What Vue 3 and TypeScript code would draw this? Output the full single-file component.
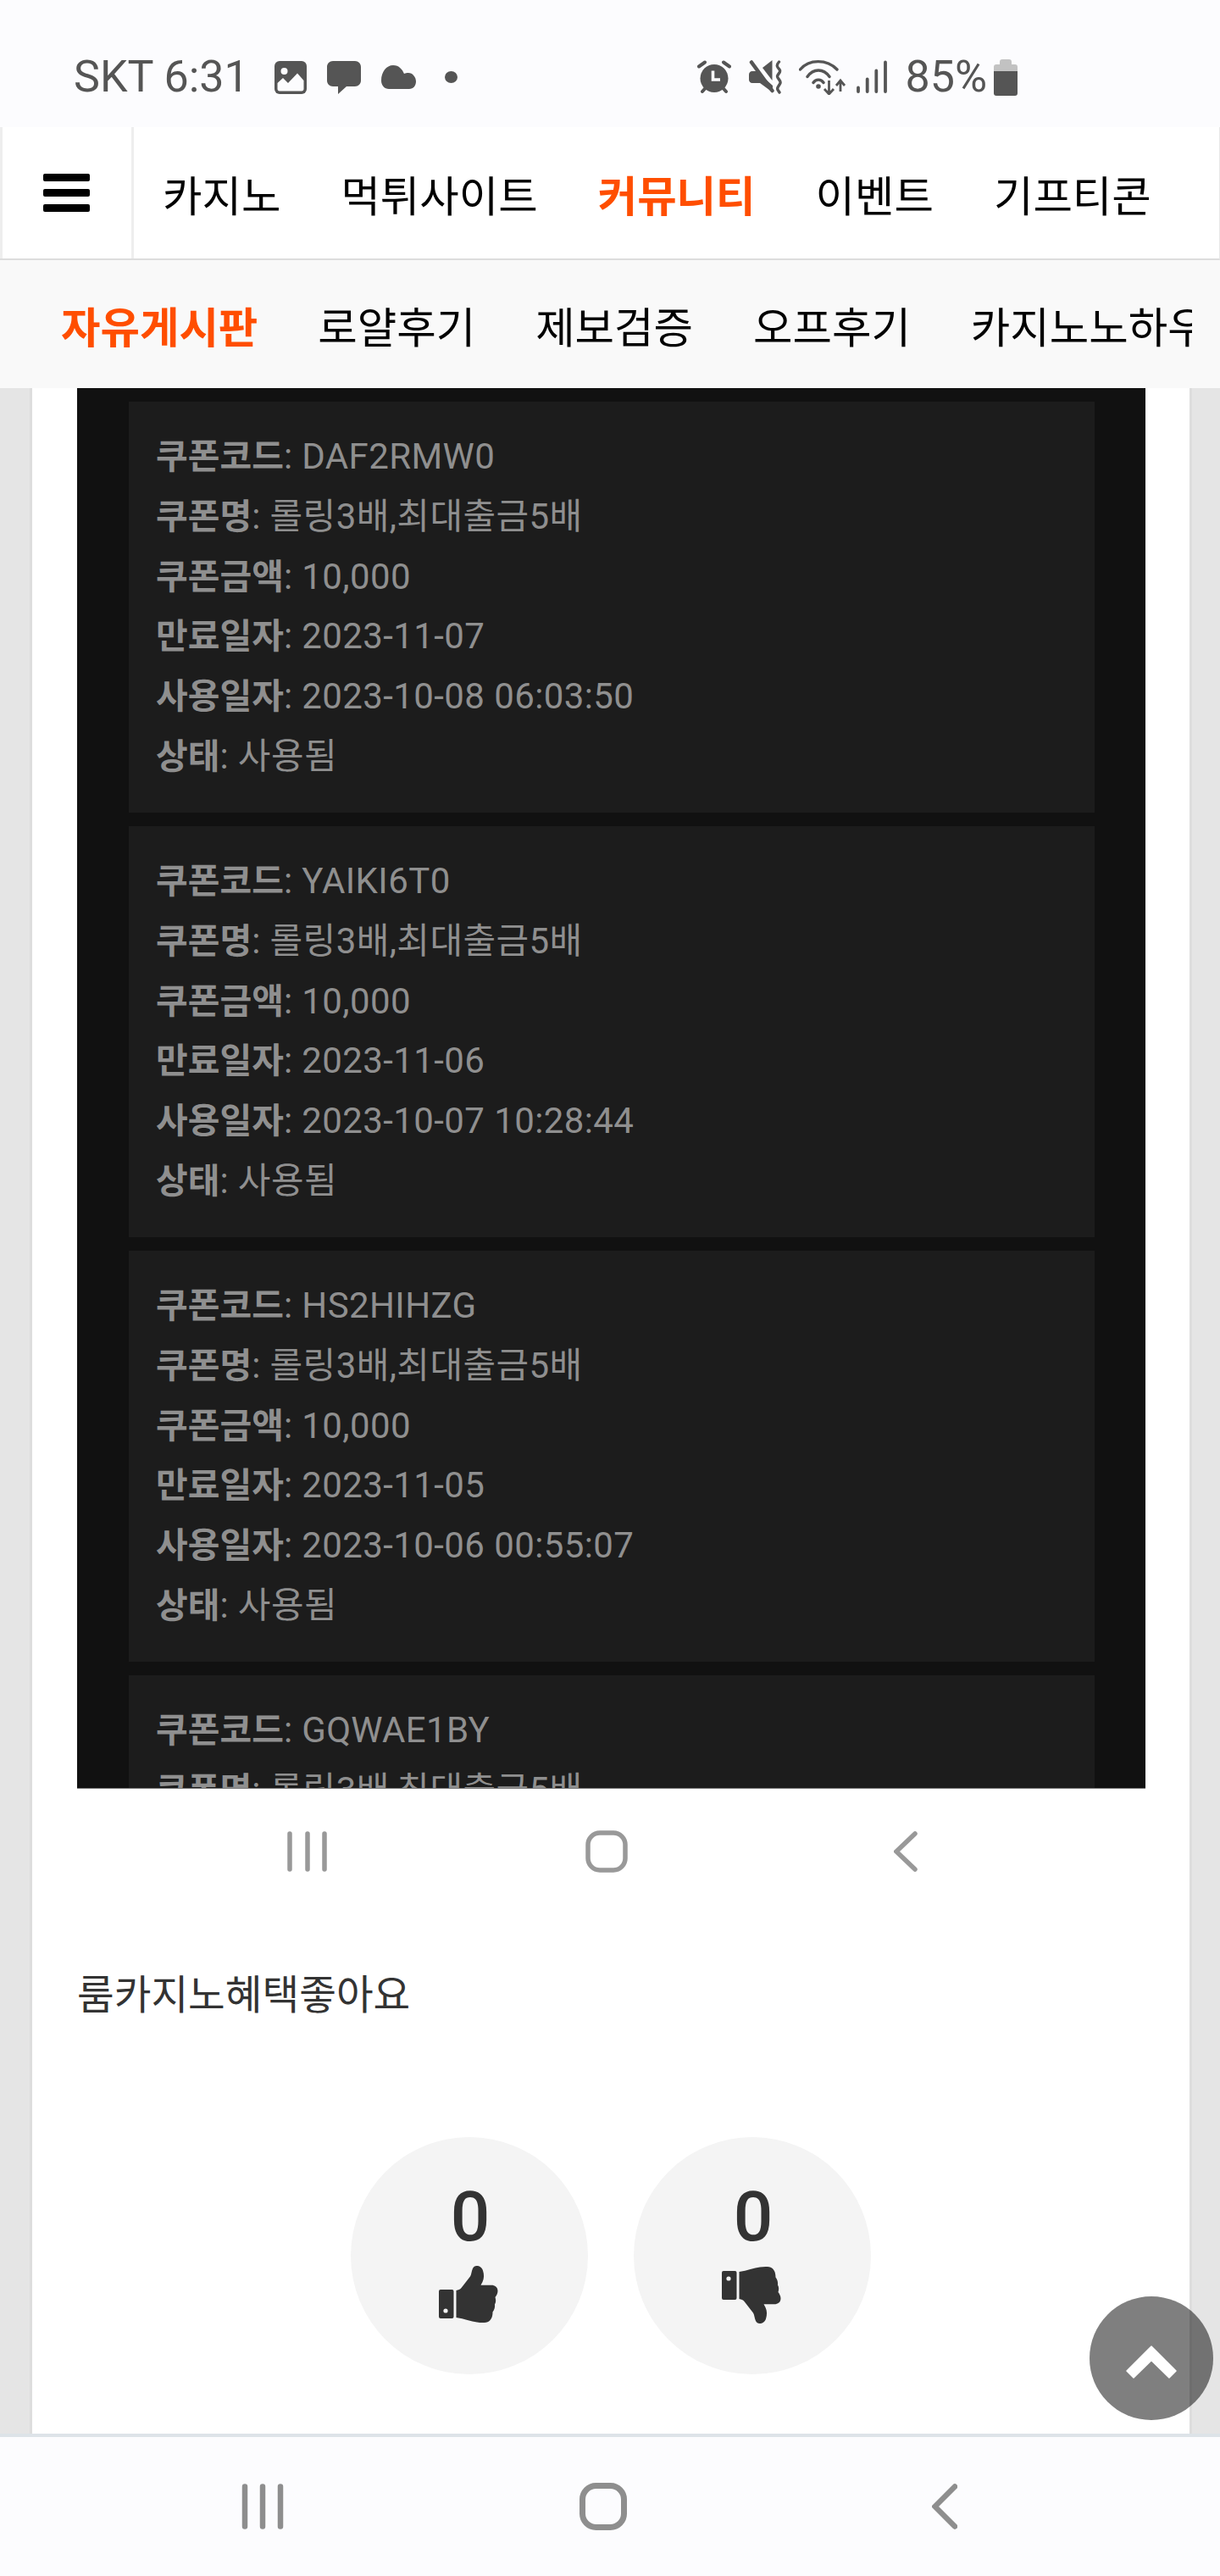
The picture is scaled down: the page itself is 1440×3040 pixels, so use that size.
<script setup lang="ts">
interface Coupon { code: string; expires: string; used: string }
const mainNav: { label: string; active?: boolean }[] = [
  { label: '카지노' },
  { label: '먹튀사이트' },
  { label: '커뮤니티', active: true },
  { label: '이벤트' },
  { label: '기프티콘' },
]
const subNav: { label: string; active?: boolean }[] = [
  { label: '자유게시판', active: true },
  { label: '로얄후기' },
  { label: '제보검증' },
  { label: '오프후기' },
  { label: '카지노노하우' },
]
const coupons: Coupon[] = [
  { code: 'DAF2RMW0', expires: '2023-11-07', used: '2023-10-08 06:03:50' },
  { code: 'YAIKI6T0', expires: '2023-11-06', used: '2023-10-07 10:28:44' },
  { code: 'HS2HIHZG', expires: '2023-11-05', used: '2023-10-06 00:55:07' },
  { code: 'GQWAE1BY', expires: '2023-11-04', used: '2023-10-05 00:00:00' },
]
const thumb = 'M20.5 29C23 28.5 25 28 26.5 26L37 12.5C38.5 10 38.5 6 40 3C41 1 42.5 0 44.5 0C48 0 51 2 52 5.5C53.5 10 53.5 15 51.5 19L49.5 22.7H62C66 22.7 69.5 25 69.5 29.5C69.5 32.5 68 35 66.5 37C67.5 40 67.5 43 66 45.5C66.5 48.5 65.5 52 63.5 54.5C63.5 59 62.5 63 59 65.5C56 67.5 50 67.3 45 66.5C38 65.5 30 62.5 20.5 61Z'
</script>

<template>
  <div class="page">
    <div class="status">
      <div class="status-left">
        <span class="status-text">SKT 6:31</span>
        <svg class="ic-image" width="38" height="39" viewBox="0 0 38 39">
          <rect width="38" height="39" rx="6" fill="#555" />
          <circle cx="11.5" cy="12" r="4" fill="#fcfcfe" />
          <path d="M3.5 26L10 20L16 26L27 14.5L34.5 23V33C34.5 34.5 33.5 35.5 32 35.5H6C4.5 35.5 3.5 34.5 3.5 33Z" fill="#fcfcfe" />
        </svg>
        <svg class="ic-msg" width="40" height="39" viewBox="0 0 40 39">
          <path d="M7 0H33C37 0 40 3 40 7V23C40 27 37 30 33 30H23L13 39V30H7C3 30 0 27 0 23V7C0 3 3 0 7 0Z" fill="#555" />
        </svg>
        <svg class="ic-cloud" width="41" height="28" viewBox="0 0 41 28">
          <path d="M9 28C4 28 0 24 0 18C0 8 6 0 14 0C21 0 25 5 27 10C29 9 30 9 32 9C37 9 41 14 41 19C41 24 38 28 33 28Z" fill="#555" />
        </svg>
        <span class="dot"></span>
      </div>
      <div class="status-right">
        <svg class="ic-alarm" width="40" height="40" viewBox="0 0 40 40">
          <circle cx="20" cy="21.5" r="16.5" fill="#555" />
          <path d="M18.5 12.5V23H27" fill="none" stroke="#fcfcfe" stroke-width="3.6" />
          <path d="M2 7.5L9 2.5M38 7.5L31 2.5M6 37L10 32.5M34 37L30 32.5" stroke="#555" stroke-width="4" stroke-linecap="round" />
        </svg>
        <svg class="ic-mute" width="40" height="40" viewBox="0 0 40 40">
          <path d="M0 17C0 15 1.500 13 4 13H9L28 30V38L13 27H4C1.500 27 0 25 0 23Z" fill="#555" />
          <path d="M16 9L27.500 0V24Z" fill="#555" />
          <path d="M3 2.500L27.500 36" stroke="#555" stroke-width="4.500" stroke-linecap="round" />
          <path d="M35.500 2C32 6 33 8 36 11C38.500 14 34 16 33.500 19C33.500 22 38 24 37 27C36 30 32.500 32 34 35L36 38" fill="none" stroke="#555" stroke-width="3.400" stroke-linecap="round" />
        </svg>
        <svg class="ic-wifi" width="58" height="42" viewBox="0 0 58 42">
          <path d="M1.500 12C12 -0.500 33 -0.500 45 12M10 20.500C17 10.500 29 10.500 36 20.500M17 27.500C20 23 26 23 29 27.500" fill="none" stroke="#555" stroke-width="3.400" stroke-linecap="round" />
          <circle cx="23" cy="32" r="2.800" fill="#555" />
          <path d="M35.500 25V40M30 35L35.500 41L41 35M49 38V26M44 31L49 25L54 31" fill="none" stroke="#555" stroke-width="2.800" />
        </svg>
        <svg class="ic-signal" width="37" height="40" viewBox="0 0 37 40">
          <path d="M2 32.500V37M12.700 22.500V37M23.300 12.500V37M34 2.500V37" stroke="#555" stroke-width="3.800" stroke-linecap="round" />
        </svg>
        <span class="status-text pct">85%</span>
        <svg class="ic-battery" width="28" height="43" viewBox="0 0 28 43">
          <path d="M7 3C7 1 8 0 10 0H18C20 0 21 1 21 3V6H25C27 6 28 7 28 9V14H0V9C0 7 1 6 3 6H7Z" fill="#c2c2c2" />
          <path d="M0 14H28V40C28 42 27 43 25 43H3C1 43 0 42 0 40Z" fill="#555" />
        </svg>
      </div>
    </div>

    <header class="header">
      <div class="burger"><span></span><span></span><span></span></div>
      <nav class="main-nav">
        <a v-for="item in mainNav" :key="item.label" :class="{ active: item.active }">{{ item.label }}</a>
      </nav>
    </header>

    <nav class="sub-nav">
      <div class="sub-track">
        <a v-for="item in subNav" :key="item.label" :class="{ active: item.active }">{{ item.label }}</a>
      </div>
    </nav>

    <main class="main">
      <div class="column">
        <div class="shot">
          <div v-for="c in coupons" :key="c.code" class="card">
            <p><b>쿠폰코드</b>: {{ c.code }}</p>
            <p><b>쿠폰명</b>: 롤링3배,최대출금5배</p>
            <p><b>쿠폰금액</b>: 10,000</p>
            <p><b>만료일자</b>: {{ c.expires }}</p>
            <p><b>사용일자</b>: {{ c.used }}</p>
            <p><b>상태</b>: 사용됨</p>
          </div>
        </div>
        <div class="shot-nav">
          <svg width="50" height="48" viewBox="0 0 50 48">
            <path d="M3 3V45M24 3V45M44 3V45" stroke="#999" stroke-width="5.5" stroke-linecap="round" />
          </svg>
          <svg width="50" height="50" viewBox="0 0 50 50">
            <rect x="3" y="3" width="44" height="44" rx="14" fill="none" stroke="#999" stroke-width="5.5" />
          </svg>
          <svg width="28" height="48" viewBox="0 0 28 48">
            <path d="M25 3L3 24L25 45" fill="none" stroke="#999" stroke-width="5.5" stroke-linecap="round" />
          </svg>
        </div>
        <p class="post-text">룸카지노혜택좋아요</p>
        <div class="votes">
          <div class="vote">
            <span class="count">0</span>
            <svg class="thumb-up" width="70" height="68" viewBox="0 0 70 68">
              <rect y="28" width="17.5" height="34" rx="2" fill="#333" />
              <circle cx="8" cy="53" r="2.6" fill="#f4f4f4" />
              <path :d="thumb" fill="#333" />
            </svg>
          </div>
          <div class="vote">
            <span class="count">0</span>
            <svg class="thumb-down" width="70" height="68" viewBox="0 0 70 68">
              <g transform="translate(0,68) scale(1,-1)">
                <rect y="28" width="17.5" height="34" rx="2" fill="#333" />
                <circle cx="8" cy="53" r="2.6" fill="#f4f4f4" />
                <path :d="thumb" fill="#333" />
              </g>
            </svg>
          </div>
        </div>
      </div>
      <button class="to-top" type="button" aria-label="top">
        <svg width="60" height="39" viewBox="0 0 60 39">
          <path d="M30 1L59 30L51 38L30 17.500L9 38L1 30Z" fill="#fff" stroke="#fff" stroke-width="1.500" stroke-linejoin="round" />
        </svg>
      </button>
    </main>

    <footer class="sys-nav">
      <svg width="50" height="54" viewBox="0 0 50 54">
        <path d="M4 3.5V50.5M25 3.5V50.5M46 3.5V50.5" stroke="#8e8e8e" stroke-width="6.5" stroke-linecap="round" />
      </svg>
      <svg width="56" height="56" viewBox="0 0 56 56">
        <rect x="3.5" y="3.5" width="49" height="49" rx="16" fill="none" stroke="#8e8e8e" stroke-width="7" />
      </svg>
      <svg width="30" height="54" viewBox="0 0 30 54">
        <path d="M27 3.5L3.5 27L27 50.5" fill="none" stroke="#8e8e8e" stroke-width="6.5" stroke-linecap="round" />
      </svg>
    </footer>
  </div>
</template>

<style scoped>
.page {
  width: 1440px;
  height: 3040px;
  display: flex;
  flex-direction: column;
  overflow: hidden;
  font-family: Roboto, "Noto Sans CJK KR", sans-serif;
  background: #fff;
}
.status {
  height: 150px;
  flex: none;
  display: flex;
  align-items: center;
  justify-content: space-between;
  padding: 0 239px 0 87px;
  box-sizing: border-box;
  background: #fcfcfe;
  color: #555;
}
.status-left, .status-right {
  display: flex;
  align-items: center;
  height: 60px;
  margin-top: 32px;
}
.status-text { font-size: 52px; line-height: 60px; }
.ic-image { margin-left: 30px; }
.ic-msg { margin-left: 24px; }
.ic-cloud { margin-left: 24px; }
.dot { width: 15px; height: 14px; border-radius: 50%; background: #555; margin-left: 34px; }
.ic-mute { margin-left: 21px; }
.ic-wifi { margin-left: 19px; }
.ic-signal { margin-left: 10px; }
.pct { margin-left: 20px; }
.ic-battery { margin-left: 8px; }

.header {
  height: 157px;
  flex: none;
  display: flex;
  box-sizing: border-box;
  border-bottom: 2px solid #ddd;
  border-right: 1px solid #e8e8e8;
  background: #fff;
}
.burger {
  width: 158px;
  box-sizing: border-box;
  border-left: 3px solid #eee;
  border-right: 3px solid #eee;
  display: flex;
  flex-direction: column;
  gap: 9px;
  padding: 55px 0 0 48px;
}
.burger span { display: block; width: 55px; height: 9px; border-radius: 2px; background: #000; }
.main-nav {
  display: flex;
  align-items: center;
  gap: 71px;
  padding-left: 34px;
  font-size: 50.5px;
  color: #000;
}
.main-nav a, .sub-track a { white-space: nowrap; flex: none; }
.active { color: #ff4e00; font-weight: 700; }
.sub-nav {
  height: 151px;
  flex: none;
  background: #f9f9f9;
}
.sub-track {
  width: 1407px;
  height: 100%;
  box-sizing: border-box;
  display: flex;
  align-items: center;
  gap: 71px;
  padding-left: 72px;
  font-size: 50.5px;
  color: #000;
  overflow: hidden;
}

.main {
  flex: 1;
  min-height: 0;
  position: relative;
  background: #e5e5e5;
  overflow: hidden;
  border-bottom: 4px solid #dde3e8;
}
.column {
  width: 1372px;
  margin-left: 35px;
  height: 100%;
  box-sizing: border-box;
  background: #fff;
  border-left: 3px solid #ddd;
  border-right: 3px solid #ddd;
}
.shot {
  margin: 0 52px 0 53px;
  height: 1653px;
  box-sizing: border-box;
  padding: 16px 60px 0 61px;
  background: #111;
  overflow: hidden;
  border-bottom: 1px solid #777;
}
.card {
  height: 485px;
  margin-bottom: 16px;
  box-sizing: border-box;
  padding: 30px 32px;
  background: #1c1c1c;
  color: #8f8f8f;
  font-size: 42px;
  letter-spacing: .4px;
  line-height: 70px;
}
.card p { margin: 0; height: 70.8px; white-space: nowrap; }
.card b { font-weight: 700; font-size: 41px; letter-spacing: 0; }
.shot-nav {
  display: flex;
  align-items: center;
  padding: 49px 0 0 301px;
  height: 50px;
}
.shot-nav svg:nth-child(2) { margin-left: 302px; }
.shot-nav svg:nth-child(3) { margin-left: 314px; }
.post-text {
  margin: 115px 0 0 53px;
  font-size: 47.5px;
  line-height: 60px;
  color: #333;
}
.votes {
  display: flex;
  justify-content: center;
  gap: 54px;
  margin-top: 137px;
}
.vote {
  width: 280px;
  height: 280px;
  border-radius: 50%;
  background: #f4f4f4;
  display: flex;
  flex-direction: column;
  align-items: center;
  color: #333;
}
.count { font-size: 82px; font-weight: 500; line-height: 96px; margin: 46px 0 0 2px; }
.thumb-up, .thumb-down { margin: 10px 2px 0 0; }
.to-top {
  position: absolute;
  left: 1286px;
  top: 2252px;
  width: 146px;
  height: 146px;
  border: 0;
  padding: 8px 0 0;
  border-radius: 50%;
  background: rgba(0, 0, 0, .5);
  display: flex;
  align-items: center;
  justify-content: center;
}
.sys-nav {
  height: 164px;
  flex: none;
  box-sizing: border-box;
  background: #fcfcfe;
  display: flex;
  align-items: center;
  padding-left: 285px;
}
.sys-nav svg:nth-child(2) { margin-left: 349px; }
.sys-nav svg:nth-child(3) { margin-left: 360px; }
</style>
